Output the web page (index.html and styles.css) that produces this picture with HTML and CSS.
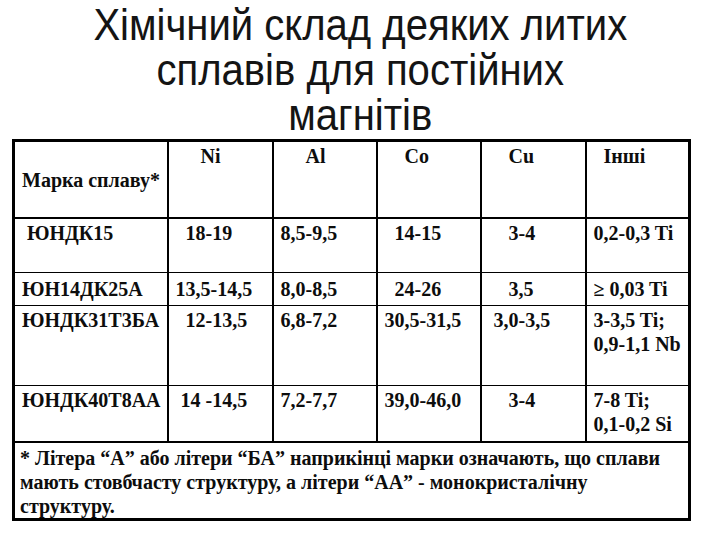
FILE: index.html
```html
<!DOCTYPE html>
<html>
<head>
<meta charset="utf-8">
<link rel="stylesheet" href="styles.css">
</head>
<body>
<div class="slide">
  <h1 class="title"><span class="squeeze">Хімічний склад деяких литих<br>сплавів для постійних<br>магнітів</span></h1>
  <table class="alloys">
    <colgroup>
      <col class="c1"><col class="c2"><col class="c3"><col class="c4"><col class="c5"><col class="c6">
    </colgroup>
    <tr class="head">
      <td class="mid">Марка сплаву*</td>
      <td class="th">&nbsp;&nbsp;&nbsp;&nbsp;&nbsp;Ni</td>
      <td class="th">&nbsp;&nbsp;&nbsp;&nbsp;&nbsp;Al</td>
      <td class="th">&nbsp;&nbsp;&nbsp;&nbsp;Co</td>
      <td class="th">&nbsp;&nbsp;&nbsp;&nbsp;Cu</td>
      <td class="th">&nbsp;&nbsp;Інші</td>
    </tr>
    <tr class="r1">
      <td>&nbsp;ЮНДК15</td>
      <td>&nbsp;&nbsp;18-19</td>
      <td>8,5-9,5</td>
      <td>&nbsp;&nbsp;14-15</td>
      <td>&nbsp;&nbsp;&nbsp;&nbsp;3-4</td>
      <td>0,2-0,3 Ti</td>
    </tr>
    <tr class="r2">
      <td>ЮН14ДК25А</td>
      <td>13,5-14,5</td>
      <td>8,0-8,5</td>
      <td>&nbsp;&nbsp;24-26</td>
      <td>&nbsp;&nbsp;&nbsp;&nbsp;3,5</td>
      <td>≥ 0,03 Ti</td>
    </tr>
    <tr class="r3">
      <td>ЮНДК31Т3БА</td>
      <td>&nbsp;&nbsp;12-13,5</td>
      <td>6,8-7,2</td>
      <td>30,5-31,5</td>
      <td>&nbsp;3,0-3,5</td>
      <td>3-3,5 Ti;<br>0,9-1,1 Nb</td>
    </tr>
    <tr class="r4">
      <td>ЮНДК40Т8АА</td>
      <td>&nbsp;14 -14,5</td>
      <td>7,2-7,7</td>
      <td>39,0-46,0</td>
      <td>&nbsp;&nbsp;&nbsp;&nbsp;3-4</td>
      <td>7-8 Ti;<br>0,1-0,2 Si</td>
    </tr>
    <tr class="foot">
      <td colspan="6">* Літера “А” або літери “БА” наприкінці марки означають, що сплави мають стовбчасту структуру, а літери “АА” - монокристалічну структуру.</td>
    </tr>
  </table>
</div>
</body>
</html>
```
FILE: styles.css
```css
html, body {
  margin: 0;
  padding: 0;
  background: #ffffff;
}
.slide {
  width: 720px;
  height: 540px;
  overflow: hidden;
}
.title {
  margin: 0;
  height: 139px;
  box-sizing: border-box;
  padding-top: 2px;
  font-family: "Liberation Sans", Arial, sans-serif;
  font-weight: normal;
  font-size: 44px;
  line-height: 45px;
  text-align: center;
  color: #141414;
}
.squeeze {
  display: inline-block;
  transform: scaleX(0.91);
  transform-origin: 50% 0;
}
.alloys {
  margin-left: 12px;
  width: 678px;
  table-layout: fixed;
  border-collapse: collapse;
  border: 3px solid #000;
  color: #0d0d0d;
}
.c1 { width: 154px; }
.c2 { width: 105px; }
.c3 { width: 104px; }
.c4 { width: 104px; }
.c5 { width: 105px; }
.c6 { width: 104px; }
.alloys td {
  font-family: "Liberation Serif", "Times New Roman", serif;
  font-weight: bold;
  font-size: 20px;
  line-height: 24px;
  border: 1px solid #000;
  border-left-width: 2px;
  border-right-width: 2px;
  padding: 2px 4px 0 7px;
  vertical-align: top;
  white-space: nowrap;
}
.alloys .head td { border-bottom: 2px solid #000; }
.alloys td.mid { vertical-align: middle; padding-top: 2px; }
.head { height: 77px; }
.r1 { height: 55px; }
.r2 { height: 33px; }
.alloys .r2 td { vertical-align: middle; padding-top: 0; }
.r3 { height: 80px; }
.r4 { height: 56px; }
.foot { height: 77px; }
.alloys .foot td {
  white-space: normal;
  border-top: 2px solid #000;
  padding: 3px 20px 0 5px;
  line-height: 24px;
}
```
